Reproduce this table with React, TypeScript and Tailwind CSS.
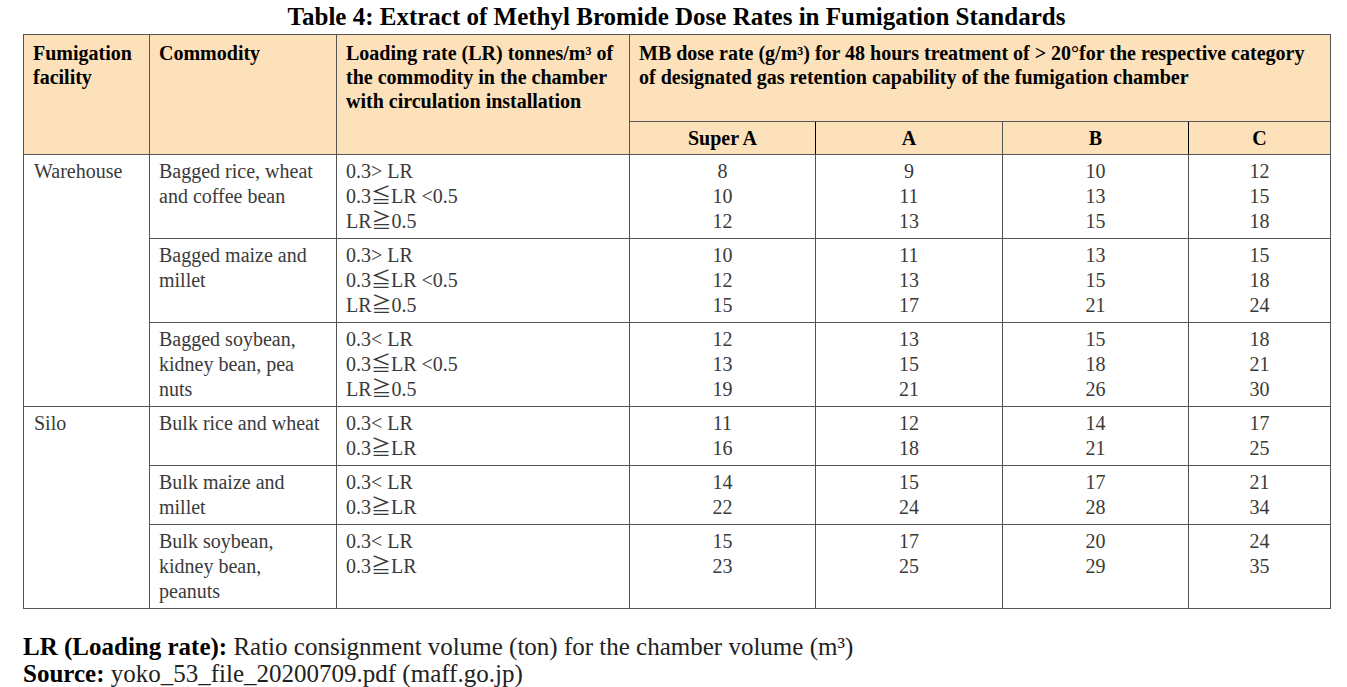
const rows = [
  {
    facility: "Warehouse",
    groups: [
      {
        commodity: ["Bagged rice, wheat", "and coffee bean"],
        lr: ["0.3> LR", "0.3≦LR <0.5", "LR≧0.5"],
        doses: [["8", "10", "12"], ["9", "11", "13"], ["10", "13", "15"], ["12", "15", "18"]],
      },
      {
        commodity: ["Bagged maize and", "millet"],
        lr: ["0.3> LR", "0.3≦LR <0.5", "LR≧0.5"],
        doses: [["10", "12", "15"], ["11", "13", "17"], ["13", "15", "21"], ["15", "18", "24"]],
      },
      {
        commodity: ["Bagged soybean,", "kidney bean, pea", "nuts"],
        lr: ["0.3< LR", "0.3≦LR <0.5", "LR≧0.5"],
        doses: [["12", "13", "19"], ["13", "15", "21"], ["15", "18", "26"], ["18", "21", "30"]],
      },
    ],
  },
  {
    facility: "Silo",
    groups: [
      {
        commodity: ["Bulk rice and wheat"],
        lr: ["0.3< LR", "0.3≧LR"],
        doses: [["11", "16"], ["12", "18"], ["14", "21"], ["17", "25"]],
      },
      {
        commodity: ["Bulk maize and", "millet"],
        lr: ["0.3< LR", "0.3≧LR"],
        doses: [["14", "22"], ["15", "24"], ["17", "28"], ["21", "34"]],
      },
      {
        commodity: ["Bulk soybean,", "kidney bean,", "peanuts"],
        lr: ["0.3< LR", "0.3≧LR"],
        doses: [["15", "23"], ["17", "25"], ["20", "29"], ["24", "35"]],
      },
    ],
  },
];

function Lines({ items }: { items: string[] }) {
  return (
    <>
      {items.map((line, i) => (
        <div key={i} className="whitespace-nowrap">
          {line}
        </div>
      ))}
    </>
  );
}

export default function App() {
  const cell = "border border-[#555] align-top pt-[4px] pb-[4px] px-[9px] text-[20px] leading-[25px] text-[#3a3a3a]";
  const head = "border border-[#555] align-top pt-[6px] px-[9px] text-[20px] leading-[24px] font-bold text-black";

  return (
    <div className="min-h-screen bg-white font-['Liberation_Serif','Noto_Sans_CJK_JP',serif]">
      <div className="ml-[23px] w-[1307px]">
        <h1 className="pt-[4px] mb-[4px] text-center text-[25px] leading-[26px] font-bold text-black">
          Table 4: Extract of Methyl Bromide Dose Rates in Fumigation Standards
        </h1>

        <table className="w-[1307px] table-fixed border-collapse">
          <colgroup>
            <col className="w-[126px]" />
            <col className="w-[187px]" />
            <col className="w-[293px]" />
            <col className="w-[186px]" />
            <col className="w-[187px]" />
            <col className="w-[186px]" />
            <col className="w-[142px]" />
          </colgroup>
          <thead className="bg-[#fde1ba]">
            <tr className="h-[87px]">
              <th rowSpan={2} className={head + " text-left"}>
                <Lines items={["Fumigation", "facility"]} />
              </th>
              <th rowSpan={2} className={head + " text-left"}>
                Commodity
              </th>
              <th rowSpan={2} className={head + " text-left px-[8px]"}>
                <Lines items={["Loading rate (LR) tonnes/m³ of", "the commodity in the chamber", "with circulation installation"]} />
              </th>
              <th colSpan={4} className={head + " text-left px-[8px]"}>
                <Lines
                  items={[
                    "MB dose rate (g/m³) for 48 hours treatment of > 20°for the respective category",
                    "of designated gas retention capability of the fumigation chamber",
                  ]}
                />
              </th>
            </tr>
            <tr className="h-[33px]">
              {["Super A", "A", "B", "C"].map((c, i) => (
                <th
                  key={c}
                  className={
                    "border align-middle text-center text-[20px] leading-[24px] font-bold text-black " +
                    (i === 0 || i === 2 ? "border-[#555] border-r-black" : "border-[#555]")
                  }
                >
                  {c}
                </th>
              ))}
            </tr>
          </thead>
          <tbody>
            {rows.map((r) =>
              r.groups.map((g, gi) => (
                <tr key={r.facility + gi}>
                  {gi === 0 && (
                    <td rowSpan={r.groups.length} className={cell + " pl-[10px]"}>
                      {r.facility}
                    </td>
                  )}
                  <td className={cell}>
                    <Lines items={g.commodity} />
                  </td>
                  <td className={cell + " px-[8px]"}>
                    <Lines items={g.lr} />
                  </td>
                  {g.doses.map((d, di) => (
                    <td key={di} className={cell + " text-center"}>
                      <Lines items={d} />
                    </td>
                  ))}
                </tr>
              ))
            )}
          </tbody>
        </table>

        <div className="mt-[24px] text-[25px] leading-[27px] text-[#222]">
          <p>
            <span className="font-bold text-black">LR (Loading rate):</span> Ratio consignment volume (ton) for the chamber volume (m³)
          </p>
          <p>
            <span className="font-bold text-black">Source:</span> yoko_53_file_20200709.pdf (maff.go.jp)
          </p>
        </div>
      </div>
    </div>
  );
}
